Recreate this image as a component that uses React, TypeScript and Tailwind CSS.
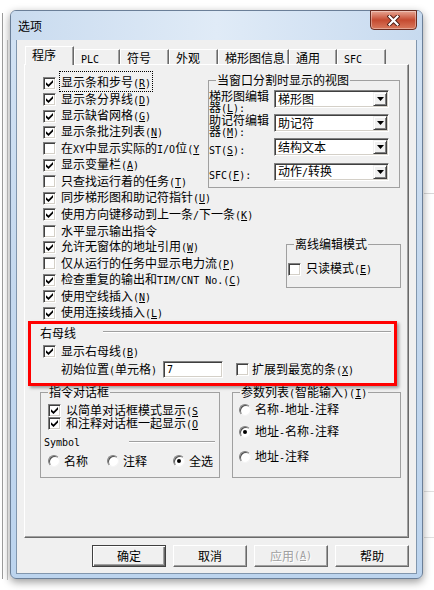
import React from 'react';

type P = { children?: React.ReactNode };

// Latin text in the dialog font is a fixed 6px cell
const Lat = ({ children }: P) => (
  <span className="font-['DejaVu_Sans_Mono',monospace] text-[10px]">{children}</span>
);

// mnemonic "(X)" with the key letter underlined
const K = ({ k, open }: { k: string; open?: boolean }) => (
  <Lat>
    (<span className="underline underline-offset-[1px]">{k}</span>
    {open ? '' : ')'}
  </Lat>
);

const Check = ({ on }: { on?: boolean }) => (
  <span className="w-[13px] h-[13px] shrink-0 bg-white border border-t-[#808080] border-l-[#808080] border-r-white border-b-white shadow-[inset_1px_1px_0_#404040,inset_-1px_-1px_0_#d4d0c8] flex items-center justify-center">
    {on && (
      <svg width="7" height="7" viewBox="0 0 7 7">
        <path d="M0 2.2 L2.5 4.5 L7 0 L7 2.5 L2.5 7 L0 4.7Z" fill="#000" />
      </svg>
    )}
  </span>
);

const Radio = ({ on }: { on?: boolean }) => (
  <span className="w-[12px] h-[12px] shrink-0 rounded-full bg-white border border-t-[#808080] border-l-[#808080] border-r-[#f4f4f4] border-b-[#f4f4f4] shadow-[inset_1px_1px_0_#505050] flex items-center justify-center">
    {on && <span className="w-[4px] h-[4px] rounded-full bg-black" />}
  </span>
);

const CRow = ({ on, children }: { on?: boolean; children: React.ReactNode }) => (
  <div className="h-[16.43px] flex items-center gap-[5px] whitespace-nowrap">
    <Check on={on} />
    <span className="leading-[12px]">{children}</span>
  </div>
);

const Group = ({ title, className, children }: { title: React.ReactNode; className: string; children?: React.ReactNode }) => (
  <div className={`relative border border-[#a0a0a0] ${className}`}>
    <span className="absolute left-[7px] -top-[7px] px-[1px] bg-[#f0f0f0] leading-[12px] whitespace-nowrap">{title}</span>
    {children}
  </div>
);

const Combo = ({ value }: { value: React.ReactNode }) => (
  <div className="w-[115px] h-[18px] shrink-0 bg-white border border-t-[#808080] border-l-[#808080] border-r-white border-b-white shadow-[inset_1px_1px_0_#404040,inset_-1px_-1px_0_#d4d0c8] flex items-center p-[1px]">
    <span className="flex-1 pl-[2px] leading-[12px] whitespace-nowrap">{value}</span>
    <span className="w-[14px] h-[14px] bg-[#f0f0f0] border border-t-[#f0f0f0] border-l-[#f0f0f0] border-r-[#404040] border-b-[#404040] shadow-[inset_1px_1px_0_#fff,inset_-1px_-1px_0_#808080] flex items-center justify-center">
      <svg width="7" height="4" viewBox="0 0 7 4">
        <path d="M0 0H7L3.5 4Z" fill="#000" />
      </svg>
    </span>
  </div>
);

// two-line label that Windows wraps inside a narrow static control
const Label2 = ({ a, b }: { a: React.ReactNode; b: React.ReactNode }) => (
  <div className="w-[65px] shrink-0 flex flex-col whitespace-nowrap">
    <span className="h-[11px] leading-[11px] overflow-visible">{a}</span>
    <span className="h-[11px] leading-[11px]">{b}</span>
  </div>
);

const Tab = ({ label, w, sel }: { label: React.ReactNode; w: string; sel?: boolean }) => (
  <div
    className={`${w} ${sel ? 'h-[19px] -mb-px relative z-10' : 'h-[15px]'} shrink-0 bg-[#f0f0f0] border border-t-white border-l-white border-r-[#696969] border-b-0 shadow-[inset_-1px_0_0_#a0a0a0] pl-[6px] pt-[2px] leading-[12px] whitespace-nowrap`}
  >
    {label}
  </div>
);

const Btn = ({ children, def, off }: { children: React.ReactNode; def?: boolean; off?: boolean }) => (
  <div
    className={`w-[74px] h-[22px] flex items-center justify-center bg-[#f0f0f0] leading-[12px] ${
      def
        ? 'border border-[#404040] shadow-[inset_1px_1px_0_#fff,inset_-1px_-1px_0_#696969,inset_-2px_-2px_0_#a0a0a0]'
        : 'border border-t-white border-l-white border-r-[#696969] border-b-[#696969] shadow-[inset_-1px_-1px_0_#a0a0a0]'
    } ${off ? 'text-[#a0a0a0] [text-shadow:1px_1px_0_#fff]' : ''}`}
  >
    {children}
  </div>
);

export default function App() {
  return (
    <div className="relative w-[434px] h-[590px] bg-white overflow-hidden text-[12px] text-black font-['Noto_Sans_CJK_SC',sans-serif]">
      {/* bits of the windows behind */}
      <div className="absolute left-[2px] top-[13px] w-px h-[566px] bg-[#9c9c9c]" />
      <div className="absolute left-[7px] top-[40px] w-px h-[540px] bg-[#c8c8c8]" />
      <div className="absolute left-[424px] top-[193px] w-[10px] h-px bg-[#d8d8d8]" />
      <div className="absolute left-[424px] top-[491px] w-[10px] h-px bg-[#e0e0e0]" />
      <div className="absolute left-[424px] top-[537px] w-[10px] h-px bg-[#e0e0e0]" />

      {/* dialog window */}
      <div className="absolute left-[10px] top-[10px] w-[413px] h-[569px] rounded-[6px] border border-[#6b7f98] bg-gradient-to-b from-[#d3e3f4] via-[#c4d8ee] to-[#bcd4ee] shadow-[0_3px_9px_rgba(0,0,0,0.4)]">
        <div className="relative h-[29px] flex items-center pl-[7px] bg-gradient-to-r from-[#c9dbef] via-[#e0ebf7] to-[#c7daef] rounded-t-[5px]">
          <span className="leading-[12px]">选项</span>
          <div className="absolute right-[5px] -top-px w-[47px] h-[20px] rounded-b-[4px] border border-[#6b2c20] bg-gradient-to-b from-[#e6a593] via-[#c54a30] to-[#d9785c] shadow-[inset_0_0_0_1px_rgba(255,255,255,0.35)] flex items-center justify-center">
            <svg width="13" height="11" viewBox="0 0 13 11">
              <path d="M2.5 1.5 L10.5 9.5 M10.5 1.5 L2.5 9.5" stroke="#4a1a12" strokeWidth="4" strokeLinecap="square" />
              <path d="M2.5 1.5 L10.5 9.5 M10.5 1.5 L2.5 9.5" stroke="#fff" strokeWidth="2.2" strokeLinecap="square" />
            </svg>
          </div>
        </div>

        <div className="ml-[6px] w-[399px] h-[533px] bg-[#f0f0f0] shadow-[0_0_0_1px_#8196ad] flex flex-col">
          {/* tabs */}
          <div className="mt-[6px] ml-[8px] h-[18px] flex items-end">
            <Tab label="程序" w="w-[49px]" sel />
            <Tab label={<Lat>PLC</Lat>} w="w-[46px]" />
            <Tab label="符号" w="w-[49px]" />
            <Tab label="外观" w="w-[49px]" />
            <Tab label="梯形图信息" w="w-[71px]" />
            <Tab label="通用" w="w-[48px]" />
            <Tab label={<Lat>SFC</Lat>} w="w-[49px]" />
          </div>

          {/* tab page */}
          <div className="relative ml-[7px] w-[385px] h-[474px] border border-t-white border-l-white border-r-[#696969] border-b-[#696969] shadow-[inset_-1px_-1px_0_#a0a0a0] flex flex-col">
            <div className="flex h-[262px]">
              <div className="w-[183px] shrink-0 pl-[18px] pt-[10px] flex flex-col">
                <CRow on>
                  <span className="outline outline-1 outline-dotted outline-black outline-offset-[1px]">
                    显示条和步号<K k="R" />
                  </span>
                </CRow>
                <CRow on>显示条分界线<K k="D" /></CRow>
                <CRow on>显示缺省网格<K k="G" /></CRow>
                <CRow on>显示条批注列表<K k="N" /></CRow>
                <CRow>
                  在<Lat>XY</Lat>中显示实际的<Lat>I/O</Lat>位<K k="Y" open />
                </CRow>
                <CRow on>显示变量栏<K k="A" /></CRow>
                <CRow>只查找运行着的任务<K k="T" /></CRow>
                <CRow on>同步梯形图和助记符指针<K k="U" /></CRow>
                <CRow on>使用方向键移动到上一条<Lat>/</Lat>下一条<K k="K" /></CRow>
                <CRow>水平显示输出指令</CRow>
                <CRow on>允许无窗体的地址引用<K k="W" /></CRow>
                <CRow>仅从运行的任务中显示电力流<K k="P" /></CRow>
                <CRow on>检查重复的输出和<Lat>TIM/CNT No.</Lat><K k="C" /></CRow>
                <CRow on>使用空线插入<K k="N" /></CRow>
                <CRow on>使用连接线插入<K k="L" /></CRow>
              </div>

              <div className="w-[193px] pt-[15px] flex flex-col">
                <Group title="当窗口分割时显示的视图" className="w-[192px] h-[108px] pt-[9px] flex flex-col">
                  <div className="h-[24px] flex items-start">
                    <Label2 a="梯形图编辑" b={<>器<K k="L" /><Lat>:</Lat></>} />
                    <Combo value="梯形图" />
                  </div>
                  <div className="h-[24px] flex items-start">
                    <Label2 a="助记符编辑" b={<>器<K k="M" /><Lat>:</Lat></>} />
                    <Combo value="助记符" />
                  </div>
                  <div className="h-[25px] flex items-start">
                    <span className="w-[65px] shrink-0 mt-[5px] leading-[12px]">
                      <Lat>ST</Lat><K k="S" /><Lat>:</Lat>
                    </span>
                    <Combo value="结构文本" />
                  </div>
                  <div className="h-[24px] flex items-start">
                    <span className="w-[65px] shrink-0 mt-[5px] leading-[12px]">
                      <Lat>SFC</Lat><K k="F" /><Lat>:</Lat>
                    </span>
                    <Combo value={<>动作<Lat>/</Lat>转换</>} />
                  </div>
                </Group>

                <Group title="离线编辑模式" className="mt-[56px] ml-[78px] w-[115px] h-[44px] pl-[1px] pt-[17px]">
                  <div className="flex items-center gap-[5px]">
                    <Check />
                    <span className="leading-[12px] whitespace-nowrap">只读模式<K k="E" /></span>
                  </div>
                </Group>
              </div>
            </div>

            {/* right bus line section */}
            <div className="h-[65px] flex flex-col">
              <div className="h-[12px] flex items-start pl-[15px]">
                <span className="leading-[12px]">右母线</span>
                <span className="ml-[27px] mt-[4px] w-[288px] h-[2px] border-t border-t-[#a0a0a0] border-b border-b-white" />
              </div>
              <div className="mt-[5px] h-[15px] pl-[18px] flex items-center gap-[5px]">
                <Check on />
                <span className="leading-[12px]">显示右母线<K k="B" /></span>
              </div>
              <div className="mt-[2px] h-[17px] pl-[36px] flex items-center whitespace-nowrap">
                <span className="w-[96px] leading-[12px]">初始位置<Lat>(</Lat>单元格<Lat>)</Lat></span>
                <div className="ml-[6px] w-[60px] h-[17px] bg-white border border-t-[#808080] border-l-[#808080] border-r-white border-b-white shadow-[inset_1px_1px_0_#404040,inset_-1px_-1px_0_#d4d0c8] pl-[3px] flex items-center">
                  <Lat>7</Lat>
                </div>
                <span className="ml-[13px]"><Check /></span>
                <span className="ml-[3px] leading-[12px]">扩展到最宽的条<K k="X" /></span>
              </div>
            </div>

            {/* lower group boxes */}
            <div className="flex pl-[15px]">
              <Group title="指令对话框" className="w-[180px] h-[86px] pt-[11px] flex flex-col">
                <div className="h-[13px] pl-[7px] flex items-center gap-[5px] whitespace-nowrap">
                  <Check on />
                  <span className="leading-[12px]">以简单对话框模式显示<K k="S" open /></span>
                </div>
                <div className="h-[13px] pl-[7px] flex items-center gap-[5px] whitespace-nowrap">
                  <Check on />
                  <span className="leading-[12px]">和注释对话框一起显示<K k="O" open /></span>
                </div>
                <div className="mt-[6px] h-[12px] pl-[3px] pr-[4px] flex items-center">
                  <span className="w-[36px] leading-[12px]"><Lat>Symbol</Lat></span>
                  <span className="ml-[49px] flex-1 h-[2px] border-t border-t-[#a0a0a0] border-b border-b-white" />
                </div>
                <div className="mt-[7px] h-[12px] pl-[7px] flex items-center whitespace-nowrap">
                  <Radio />
                  <span className="ml-[4px] w-[24px] leading-[12px]">名称</span>
                  <span className="ml-[19px]"><Radio /></span>
                  <span className="ml-[4px] w-[24px] leading-[12px]">注释</span>
                  <span className="ml-[26px]"><Radio on /></span>
                  <span className="ml-[4px] leading-[12px]">全选</span>
                </div>
              </Group>

              <Group
                title={<>参数列表<Lat>(</Lat>智能输入<Lat>)</Lat><K k="I" /></>}
                className="ml-[12px] w-[169px] h-[86px] pt-[11px] pl-[6px] flex flex-col"
              >
                <div className="h-[12px] flex items-center gap-[4px] whitespace-nowrap">
                  <Radio />
                  <span className="leading-[12px]">名称<Lat>-</Lat>地址<Lat>-</Lat>注释</span>
                </div>
                <div className="mt-[10px] h-[12px] flex items-center gap-[4px] whitespace-nowrap">
                  <Radio on />
                  <span className="leading-[12px]">地址<Lat>-</Lat>名称<Lat>-</Lat>注释</span>
                </div>
                <div className="mt-[13px] h-[12px] flex items-center gap-[4px] whitespace-nowrap">
                  <Radio />
                  <span className="leading-[12px]">地址<Lat>-</Lat>注释</span>
                </div>
              </Group>
            </div>

            {/* red annotation frame */}
            <div className="absolute left-[3px] top-[256px] w-[369px] h-[65px] border-[3px] border-[#ff0000] shadow-[2px_2px_3px_rgba(0,0,0,0.35)] pointer-events-none" />
          </div>

          {/* buttons */}
          <div className="mt-[7px] pr-[7px] flex justify-end gap-[7px]">
            <Btn def>确定</Btn>
            <Btn>取消</Btn>
            <Btn off>应用<K k="A" /></Btn>
            <Btn>帮助</Btn>
          </div>
        </div>
      </div>
    </div>
  );
}
